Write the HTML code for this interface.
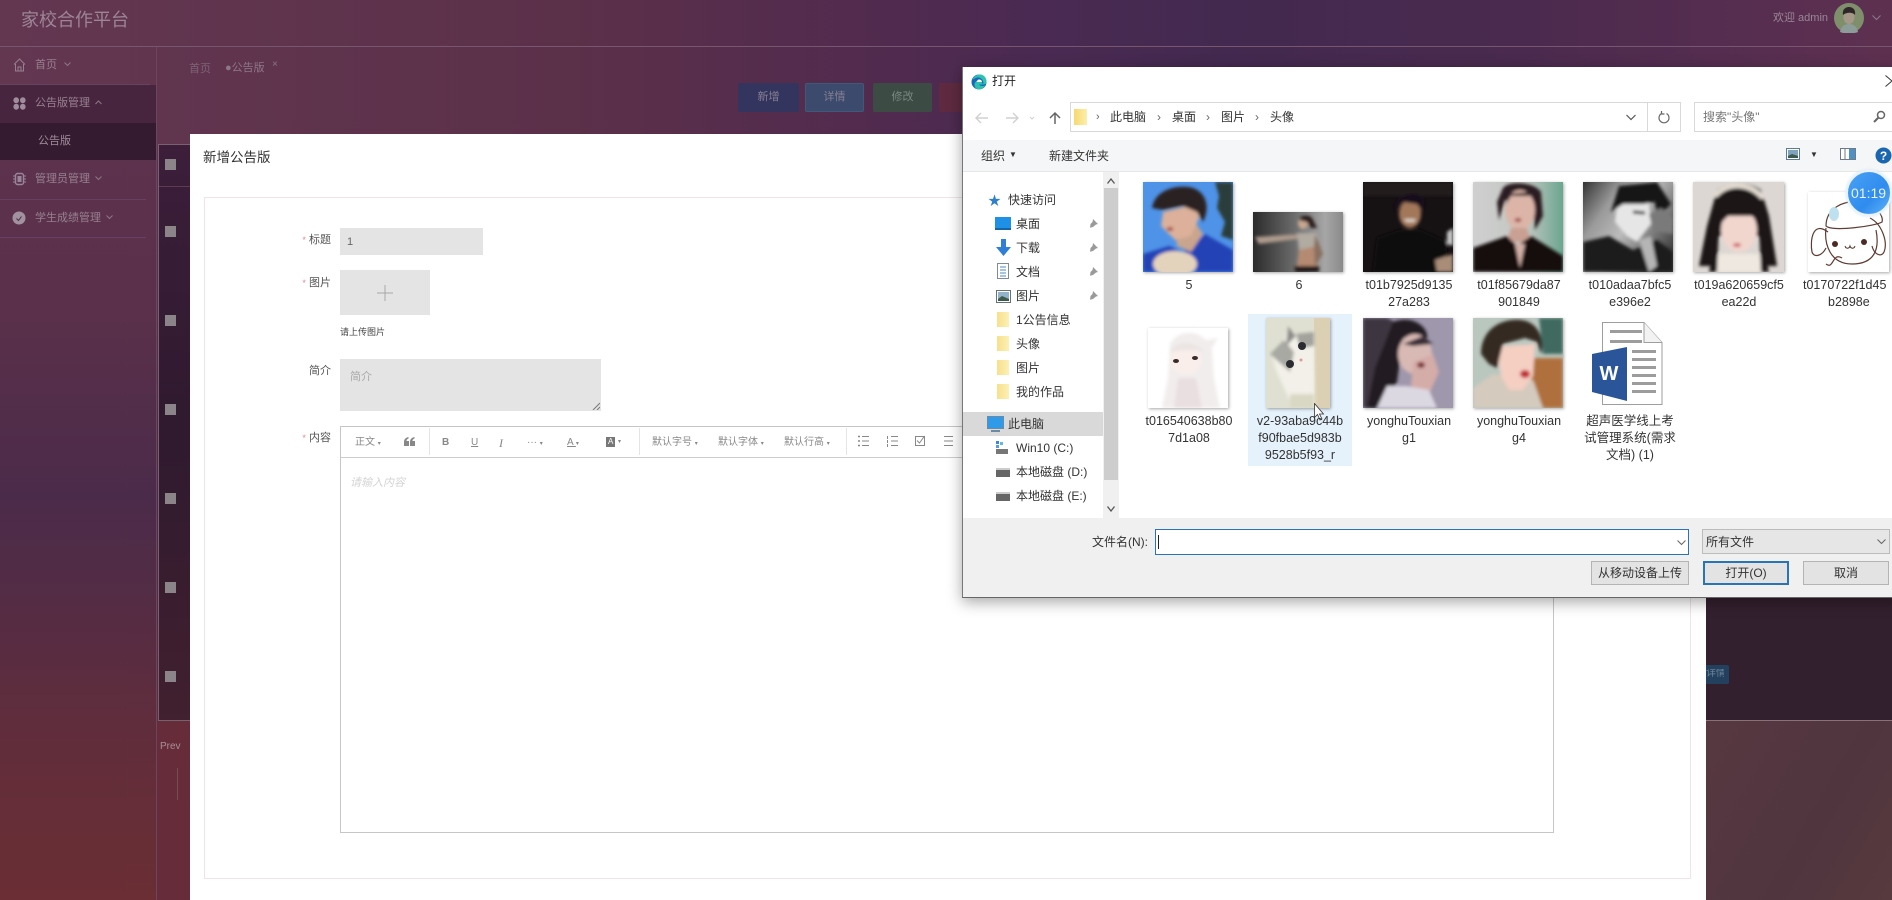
<!DOCTYPE html>
<html lang="zh"><head><meta charset="utf-8"><title>家校合作平台</title>
<style>
html,body{margin:0;padding:0;width:1892px;height:900px;overflow:hidden;background:#4b2b4a}
body{position:relative;font-family:"Liberation Sans","Noto Sans CJK SC",sans-serif;font-size:12px;color:#333}
div,span,svg{position:absolute;box-sizing:border-box}
#w{left:0;top:0;width:1892px;height:900px;overflow:hidden;filter:blur(.35px)}
.t{white-space:nowrap;line-height:1}
.bg{left:0;top:0;width:1892px;height:900px;background:linear-gradient(180deg,#5e3350 0%,#5a304a 35%,#4b2b4a 55%,#5e2d3e 80%,#6a2e34 100%)}
.bgtop{left:0;top:0;width:1892px;height:150px;background:linear-gradient(90deg,#633750 0%,#5b3049 30%,#522b4e 45%,#4a2a52 55%,#43294f 65%,#4a2a4f 80%,#5e3050 100%)}
.side{color:#97808f;font-size:11px}
.btn{height:29px;top:83px;color:#857f92;font-size:11px;text-align:center;line-height:29px;border-radius:2px}
.chk{left:165px;width:11px;height:11px;background:#8b8589}
.lab{color:#555;font-size:11px;text-align:right;width:40px;left:291px}
.lab b{color:#e08a9a;font-weight:normal;font-size:9px}
.tb{color:#888;font-size:10px;top:438px}
.sep{top:428px;height:27px;width:1px;background:#e4e4e4}
.nav{color:#333;font-size:12px;left:1016px}
.pin{left:1089px;width:9px;height:9px}
.crumb{top:111px;font-size:12px;color:#333}
.cap{width:110px;text-align:center;font-size:12.5px;line-height:17px;white-space:nowrap;color:#333;overflow:hidden}
.thumb{box-shadow:1px 1px 3px rgba(0,0,0,.35)}
.dbtn{top:561px;height:24px;background:#e3e3e3;border:1px solid #b4b4b4;text-align:center;line-height:22px;font-size:12px;color:#333}
.fold{left:1037px;width:12px;height:15px;background:linear-gradient(90deg,#f7e08d,#fdf0b5)}
</style></head><body>
<svg width="0" height="0" style="left:0;top:0"><defs><filter id="b" x="-20%" y="-20%" width="140%" height="140%"><feGaussianBlur stdDeviation="1.500"/></filter></defs></svg>
<div id="w">
<div class="bg"></div><div class="bgtop"></div>
<div style="left:0;top:600px;width:1892px;height:300px;background:linear-gradient(180deg,rgba(94,45,62,0),rgba(106,46,52,.35))"></div>

<!-- header -->
<div style="left:0;top:46px;width:1892px;height:1px;background:#77566f"></div>
<div class="t" style="left:21px;top:11px;font-size:18px;color:#9d8596">家校合作平台</div>
<div class="t" style="left:1773px;top:13px;font-size:11px;color:#9a8697">欢迎 admin</div>
<svg style="left:1834px;top:3px" width="30" height="30" viewBox="0 0 30 30"><circle cx="15" cy="15" r="15" fill="#7f8f6c"/><g filter="url(#b)" style="filter:none"><path d="M6 29c1-6 5-8 9-8s8 2 9 8c-5 2-13 2-18 0z" fill="#8c9c98"/><ellipse cx="15" cy="14" rx="5.500" ry="7" fill="#a69888"/><path d="M9 12c-1-6 3-8 6-8s7 2 6 8c-2-3-9-3-12 0z" fill="#2f2627"/></g></svg>
<svg style="left:1872px;top:15px" width="9" height="6" viewBox="0 0 9 6"><path d="M.5.500l4 4 4-4" fill="none" stroke="#8d7a8c"/></svg>

<!-- sidebar -->
<div style="left:156px;top:47px;width:1px;height:853px;background:#6a4660"></div>
<div style="left:0;top:85px;width:156px;height:38px;background:#48253f"></div>
<div style="left:0;top:123px;width:156px;height:37px;background:#351b2f"></div>
<div style="left:0;top:84px;width:150px;height:1px;background:#68435f"></div>
<div style="left:0;top:199px;width:146px;height:1px;background:#67405f"></div>
<div style="left:0;top:237px;width:146px;height:1px;background:#67405f"></div>
<svg style="left:13px;top:58px" width="13" height="14" viewBox="0 0 13 14"><path d="M1 6.500L6.500 1 12 6.500M2.500 6v7h8V6M5 13V9h3v4" fill="none" stroke="#958090"/></svg>
<div class="t side" style="left:35px;top:60px">首页</div>
<svg style="left:64px;top:62px" width="7" height="5" viewBox="0 0 7 5"><path d="M.5.500l3 3 3-3" fill="none" stroke="#8d7686"/></svg>
<svg style="left:13px;top:97px" width="13" height="13" viewBox="0 0 13 13"><g fill="#a08d9b"><ellipse cx="3.200" cy="3.200" rx="2.800" ry="3"/><ellipse cx="9.800" cy="3.200" rx="2.800" ry="3"/><ellipse cx="3.200" cy="9.800" rx="2.800" ry="3"/><ellipse cx="9.800" cy="9.800" rx="2.800" ry="3"/></g></svg>
<div class="t side" style="left:35px;top:98px">公告版管理</div>
<svg style="left:95px;top:100px" width="7" height="5" viewBox="0 0 7 5"><path d="M.5 4l3-3 3 3" fill="none" stroke="#8d7686"/></svg>
<div class="t side" style="left:38px;top:136px;color:#a18c9c">公告版</div>
<svg style="left:13px;top:172px" width="13" height="14" viewBox="0 0 13 14"><rect x="2.500" y="1.500" width="8" height="11" rx="2" fill="none" stroke="#98859a" stroke-width="1.400"/><rect x="4.500" y="4" width="4" height="6" fill="#98859a"/><path d="M0 4h2M0 7h2M0 10h2M11 4h2M11 7h2M11 10h2" stroke="#98859a"/></svg>
<div class="t side" style="left:35px;top:174px">管理员管理</div>
<svg style="left:95px;top:176px" width="7" height="5" viewBox="0 0 7 5"><path d="M.5.500l3 3 3-3" fill="none" stroke="#8d7686"/></svg>
<svg style="left:12px;top:211px" width="14" height="14" viewBox="0 0 14 14"><circle cx="7" cy="7" r="6.500" fill="#a2919f"/><path d="M4.500 7.500l2 2 3-4" fill="none" stroke="#4d2d48"/></svg>
<div class="t side" style="left:35px;top:213px">学生成绩管理</div>
<svg style="left:106px;top:215px" width="7" height="5" viewBox="0 0 7 5"><path d="M.5.500l3 3 3-3" fill="none" stroke="#8d7686"/></svg>

<!-- tabs -->
<div class="t" style="left:189px;top:64px;font-size:11px;color:#7d6477">首页</div>
<div class="t" style="left:225px;top:63px;font-size:11px;color:#8d7688">●公告版</div>
<div class="t" style="left:272px;top:60px;font-size:10px;color:#8d7688">×</div>

<!-- page buttons -->
<div class="btn" style="left:738px;width:61px;background:#34355f">新增</div>
<div class="btn" style="left:805px;width:59px;background:#3c4a6e;border:1px solid #3f5a78;line-height:27px">详情</div>
<div class="btn" style="left:873px;width:59px;background:#3c4c45;color:#7a8880">修改</div>
<div class="btn" style="left:939px;width:59px;background:#5f2a40"></div>

<!-- table peeking behind -->
<div style="left:158px;top:144px;width:32px;height:577px;border:1px solid #77626f;border-right:0;background:linear-gradient(180deg,#3c1e3a 0%,#2f1a2f 50%,#41202f 100%)"></div>
<div style="left:159px;top:186px;width:31px;height:1px;background:#5d3a55"></div>
<div class="chk" style="top:159px"></div><div class="chk" style="top:226px"></div><div class="chk" style="top:315px"></div><div class="chk" style="top:404px"></div><div class="chk" style="top:493px"></div><div class="chk" style="top:582px"></div><div class="chk" style="top:671px"></div>
<div style="left:157px;top:721px;width:33px;height:179px;background:#672c3a"></div>
<div class="t" style="left:160px;top:742px;font-size:10px;color:#a98f98">Prev</div>
<div style="left:177px;top:768px;width:1px;height:32px;background:#7a4a57"></div>

<!-- right of modal -->
<div style="left:1706px;top:590px;width:186px;height:130px;background:#33202e"></div>
<div style="left:1706px;top:720px;width:186px;height:1px;background:#8a7077"></div>
<div style="left:1706px;top:721px;width:186px;height:179px;background:linear-gradient(120deg,#573840,#50353f 60%,#573a3e)"></div>
<div style="left:1706px;top:665px;width:23px;height:19px;background:#23405f;border-radius:0 2px 2px 0"></div>
<div class="t" style="left:1706px;top:669px;font-size:10px;color:#6f8499;width:18px;overflow:hidden;text-align:right">详情</div>

<!-- modal -->
<div style="left:190px;top:134px;width:1516px;height:766px;background:#fff"></div>
<div class="t" style="left:203px;top:151px;font-size:13.500px;color:#333">新增公告版</div>
<div style="left:204px;top:197px;width:1487px;height:682px;border:1px solid #f1e3e8"></div>

<div class="t lab" style="top:235px"><b>*</b> 标题</div>
<div style="left:340px;top:228px;width:143px;height:27px;background:#e4e4e4"></div>
<div class="t" style="left:347px;top:237px;font-size:11px;color:#666">1</div>
<div class="t lab" style="top:278px"><b>*</b> 图片</div>
<div style="left:340px;top:270px;width:90px;height:45px;background:#e4e4e4"></div>
<svg style="left:377px;top:285px" width="16" height="16" viewBox="0 0 16 16"><path d="M8 0v16M0 8h16" stroke="#a8a8a8"/></svg>
<div class="t" style="left:340px;top:328px;font-size:9px;color:#444">请上传图片</div>
<div class="t lab" style="top:366px">简介</div>
<div style="left:340px;top:359px;width:261px;height:52px;background:#e4e4e4"></div>
<div class="t" style="left:350px;top:372px;font-size:11px;color:#aaa">简介</div>
<svg style="left:592px;top:402px" width="8" height="8" viewBox="0 0 8 8"><path d="M1 8l7-7M5 8l3-3" stroke="#777"/></svg>

<div class="t lab" style="top:433px"><b>*</b> 内容</div>
<div style="left:340px;top:426px;width:1214px;height:407px;border:1px solid #c6c6c6"></div>
<div style="left:341px;top:457px;width:1212px;height:1px;background:#cdcdcd"></div>
<div class="sep" style="left:429px"></div><div class="sep" style="left:639px"></div><div class="sep" style="left:846px"></div>
<div class="t tb" style="left:355px">正文 <span style="position:static;font-size:6px">▾</span></div>
<svg style="left:404px;top:437px" width="11" height="9" viewBox="0 0 11 9"><g fill="#888"><path d="M0 9V5C0 2 2 .5 4.500 0v1.500C3 2 2.500 3 2.500 4H5v5z"/><path d="M6 9V5c0-3 2-4.500 4.500-5v1.500C9 2 8.500 3 8.500 4H11v5z"/></g></svg>
<div class="t tb" style="left:442px;font-weight:bold">B</div>
<div class="t tb" style="left:471px;text-decoration:underline">U</div>
<div class="t tb" style="left:499px;font-style:italic;font-family:'Liberation Serif',serif;font-size:12px;top:437px">I</div>
<div class="t tb" style="left:527px">··· <span style="position:static;font-size:6px">▾</span></div>
<div class="t tb" style="left:567px;text-decoration:underline">A <span style="position:static;font-size:6px;display:inline-block">▾</span></div>
<div style="left:606px;top:437px;width:9px;height:10px;background:#777"></div>
<div class="t" style="left:608px;top:438px;font-size:8px;color:#fff">A</div>
<div class="t tb" style="left:618px;font-size:6px;top:439px">▾</div>
<div class="t tb" style="left:652px">默认字号 <span style="position:static;font-size:6px">▾</span></div>
<div class="t tb" style="left:718px">默认字体 <span style="position:static;font-size:6px">▾</span></div>
<div class="t tb" style="left:784px">默认行高 <span style="position:static;font-size:6px">▾</span></div>
<svg style="left:857px;top:435px" width="100" height="12" viewBox="0 0 100 12"><g stroke="#888" fill="none"><path d="M5 1.500h7M5 6h7M5 10.500h7M34 1.500h7M34 6h7M34 10.500h7"/><path d="M1 1.500h2M1 6h2M1 10.500h2" stroke-width="1.500"/><path d="M30.500 1v3M30.500 5v3M30.500 9v3"/><rect x="58.500" y="1.500" width="9" height="9"/><path d="M60 5.500l2.500 2.500 5-7"/><path d="M87 1.500h9M87 6h9M87 10.500h9"/></g></svg>
<div class="t" style="left:350px;top:478px;font-size:11px;color:#d4d4d4;font-style:italic">请输入内容</div>

<!-- dialog -->
<div style="left:962px;top:67px;width:940px;height:531px;background:#fff;box-shadow:0 4px 14px rgba(0,0,0,.35);border-left:1px solid #777;border-bottom:1px solid #666"></div>
<svg style="left:971px;top:74px" width="16" height="16" viewBox="0 0 16 16"><circle cx="8" cy="8" r="7.500" fill="#1668b8"/><path d="M1.500 6C3 1.500 7 .5 9 .5c4 0 6.500 3.500 6.500 7 0 1.500-1 3-3 3H8c1 1.500 4 2 6 1-1.500 2.500-4 4-6 4-2.500 0-4.500-2-4.500-5 0-2 2-4 4.500-4 2 0 3 1.500 3 3H12.500C12 5 9 3 6 3.500 4 4 2.500 5 1.500 6z" fill="#2fc1b0"/><path d="M8 5.500c1.500 0 3 1 3 2.500H5.500C6 6.500 7 5.500 8 5.500z" fill="#fff"/></svg>
<div class="t" style="left:992px;top:75px;font-size:12px;color:#222">打开</div>
<svg style="left:1885px;top:75px" width="7" height="12" viewBox="0 0 7 12"><path d="M.5.500L7 6 .5 11.500" fill="none" stroke="#333"/></svg>

<svg style="left:975px;top:111px" width="90" height="14" viewBox="0 0 90 14"><g fill="none" stroke="#d0d0d0" stroke-width="1.400"><path d="M13 7H1M6 2L1 7l5 5"/><path d="M31 7h12M38 2l5 5-5 5"/><path d="M55 6l2 2 2-2" stroke-width="1"/></g><path d="M80 13V2M75 7l5-5 5 5" fill="none" stroke="#666" stroke-width="1.500"/></svg>
<div style="left:1070px;top:102px;width:611px;height:30px;border:1px solid #d9d9d9"></div>
<div style="left:1647px;top:103px;width:1px;height:28px;background:#d9d9d9"></div>
<div style="left:1074px;top:109px;width:13px;height:16px;background:linear-gradient(90deg,#f6d970,#fdeeaa)"></div>
<div class="t crumb" style="left:1096px;color:#666;font-size:11px;top:112px">›</div>
<div class="t crumb" style="left:1110px">此电脑</div><div class="t crumb" style="left:1157px;color:#666;top:111px">›</div>
<div class="t crumb" style="left:1172px">桌面</div><div class="t crumb" style="left:1206px;color:#666">›</div>
<div class="t crumb" style="left:1221px">图片</div><div class="t crumb" style="left:1255px;color:#666">›</div>
<div class="t crumb" style="left:1270px">头像</div>
<svg style="left:1626px;top:114px" width="10" height="7" viewBox="0 0 10 7"><path d="M.5 1l4.500 4.500L9.500 1" fill="none" stroke="#555" stroke-width="1.200"/></svg>
<svg style="left:1658px;top:110px" width="12" height="14" viewBox="0 0 12 14"><path d="M8.500 3.500A5 5 0 1 1 3.500 3.500M3.500 1v3h3" fill="none" stroke="#666" stroke-width="1.200"/></svg>
<div style="left:1694px;top:102px;width:198px;height:30px;border:1px solid #d9d9d9;border-right:0"></div>
<div class="t" style="left:1703px;top:111px;font-size:12px;color:#777">搜索"头像"</div>
<svg style="left:1873px;top:110px" width="13" height="13" viewBox="0 0 13 13"><circle cx="8" cy="5" r="3.500" fill="none" stroke="#666" stroke-width="1.500"/><path d="M5.500 7.500L1 12" stroke="#666" stroke-width="2"/></svg>

<div style="left:963px;top:140px;width:929px;height:32px;background:#f5f6f7;border-bottom:1px solid #e6e6e6"></div>
<div class="t" style="left:981px;top:150px;font-size:12px;color:#333">组织</div>
<div class="t" style="left:1009px;top:151px;font-size:8px;color:#333">▼</div>
<div class="t" style="left:1049px;top:150px;font-size:12px;color:#333">新建文件夹</div>
<svg style="left:1786px;top:148px" width="14" height="12" viewBox="0 0 14 12"><rect x=".5" y=".5" width="13" height="11" fill="#fff" stroke="#5a7d9a"/><rect x="2" y="2" width="10" height="8" fill="#7fa3bf"/><path d="M2 8l4-2 6 2v2H2z" fill="#3d5a4a"/></svg>
<div class="t" style="left:1810px;top:151px;font-size:8px;color:#333">▼</div>
<svg style="left:1840px;top:148px" width="16" height="12" viewBox="0 0 16 12"><rect x=".5" y=".5" width="15" height="11" fill="#fff" stroke="#6d7b88"/><rect x="9" y="1" width="6" height="10" fill="#4d90c8"/><path d="M5 1v10" stroke="#6d7b88"/></svg>
<svg style="left:1875px;top:147px" width="17" height="17" viewBox="0 0 17 17"><circle cx="8.500" cy="8.500" r="8" fill="#1b66b0"/><text x="8.500" y="13" text-anchor="middle" font-family="Liberation Sans" font-weight="bold" font-size="12" fill="#fff">?</text></svg>

<!-- nav tree -->
<div style="left:1103px;top:172px;width:16px;height:346px;background:#f0f0f0"></div>
<div style="left:1104px;top:188px;width:14px;height:292px;background:#cdcdcd"></div>
<svg style="left:1107px;top:178px" width="8" height="6" viewBox="0 0 8 6"><path d="M.5 5.500L4 1l3.500 4.500" fill="none" stroke="#555" stroke-width="1.300"/></svg>
<svg style="left:1107px;top:506px" width="8" height="6" viewBox="0 0 8 6"><path d="M.5.500L4 5 7.500.5" fill="none" stroke="#555" stroke-width="1.300"/></svg>
<div style="left:963px;top:412px;width:140px;height:24px;background:#d9d9d9"></div>
<div class="t" style="left:988px;top:194px;font-size:13px;color:#2f80c8">★</div>
<div class="t" style="left:1008px;top:194px;color:#333">快速访问</div>
<div style="left:995px;top:217px;width:16px;height:13px;background:#1e90e6;border-bottom:2px solid #1665a8"></div><div class="t nav" style="top:218px">桌面</div>
<svg style="left:996px;top:239px" width="15" height="17" viewBox="0 0 15 17"><path d="M5 0h5v8h5l-7.500 9L0 8h5z" fill="#2f7fd6"/></svg><div class="t nav" style="top:242px">下载</div>
<svg style="left:997px;top:263px" width="12" height="16" viewBox="0 0 12 16"><rect x=".5" y=".5" width="11" height="15" fill="#fff" stroke="#7f8c96"/><path d="M3 4h6M3 7h6M3 10h6M3 13h6" stroke="#4d8cc0"/></svg><div class="t nav" style="top:266px">文档</div>
<svg style="left:996px;top:290px" width="15" height="13" viewBox="0 0 15 13"><rect x=".5" y=".5" width="14" height="12" fill="#fff" stroke="#65727c"/><rect x="2" y="2" width="11" height="9" fill="#93b3cc"/><path d="M2 9l4-3 7 3v2H2z" fill="#3e5a4a"/></svg><div class="t nav" style="top:290px">图片</div>
<svg class="pin" style="top:219px" viewBox="0 0 9 9"><path d="M4 0l5 5-2 .5L4 8 1 8.800 1.500 5 3.500 3z" fill="#9a9a9a"/></svg>
<svg class="pin" style="top:243px" viewBox="0 0 9 9"><path d="M4 0l5 5-2 .5L4 8 1 8.800 1.500 5 3.500 3z" fill="#9a9a9a"/></svg>
<svg class="pin" style="top:267px" viewBox="0 0 9 9"><path d="M4 0l5 5-2 .5L4 8 1 8.800 1.500 5 3.500 3z" fill="#9a9a9a"/></svg>
<svg class="pin" style="top:291px" viewBox="0 0 9 9"><path d="M4 0l5 5-2 .5L4 8 1 8.800 1.500 5 3.500 3z" fill="#9a9a9a"/></svg>
<div class="fold" style="left:997px;top:312px"></div><div class="t nav" style="top:314px">1公告信息</div>
<div class="fold" style="left:997px;top:336px"></div><div class="t nav" style="top:338px">头像</div>
<div class="fold" style="left:997px;top:360px"></div><div class="t nav" style="top:362px">图片</div>
<div class="fold" style="left:997px;top:384px"></div><div class="t nav" style="top:386px">我的作品</div>
<svg style="left:987px;top:416px" width="17" height="16" viewBox="0 0 17 16"><rect x=".5" y=".5" width="16" height="12" fill="#2f9be8" stroke="#6b8aa5"/><path d="M4 15h9" stroke="#6b8aa5" stroke-width="2"/></svg><div class="t" style="left:1008px;top:418px;color:#333">此电脑</div>
<svg style="left:995px;top:441px" width="14" height="14" viewBox="0 0 14 14"><rect x="1" y="8" width="12" height="5" fill="#777"/><rect x="1" y="0" width="3" height="3" fill="#3a8ad0"/><rect x="5" y="1" width="3" height="3" fill="#64b5e8"/><rect x="1" y="4" width="3" height="3" fill="#4ea0dc"/></svg><div class="t nav" style="top:442px">Win10 (C:)</div>
<svg style="left:996px;top:467px" width="14" height="10" viewBox="0 0 14 10"><rect y="3" width="14" height="7" fill="#666"/><rect y="1" width="14" height="2" fill="#ccc"/></svg><div class="t nav" style="top:466px">本地磁盘 (D:)</div>
<svg style="left:996px;top:491px" width="14" height="10" viewBox="0 0 14 10"><rect y="3" width="14" height="7" fill="#666"/><rect y="1" width="14" height="2" fill="#ccc"/></svg><div class="t nav" style="top:490px">本地磁盘 (E:)</div>

<!-- selected -->
<div style="left:1248px;top:314px;width:104px;height:152px;background:#e5f1fb"></div>

<!-- thumbs row 1 -->
<svg class="thumb" style="left:1143px;top:182px" width="90" height="90" viewBox="0 0 90 90"><rect width="90" height="90" fill="#4f93e8"/><g filter="url(#b)"><path d="M72 0h18v58l-12-4 4-14-8-14 2-12z" fill="#2a3d3a"/><path d="M0 72l26-8 14 6 22-18 28 16v22H0z" fill="#2443b6"/><path d="M32 46l20-6 8 12-12 18-14-6z" fill="#c9a58e"/><path d="M20 30l34-8 2 14-8 18-16 4-14-14z" fill="#dcb09a"/><path d="M9 26C12 6 38 2 50 6s18 18 10 34l-6-10-14-6-20 4z" fill="#2b2422"/><ellipse cx="32" cy="82" rx="22" ry="13" fill="#e4d3bc"/><ellipse cx="27" cy="47" rx="3.500" ry="2" fill="#a8504a"/></g></svg>
<svg class="thumb" style="left:1253px;top:212px" width="90" height="60" viewBox="0 0 90 60"><defs><linearGradient id="g6"><stop offset="0" stop-color="#2b2b2b"/><stop offset=".45" stop-color="#6a6a6a"/><stop offset=".8" stop-color="#a6a6a6"/><stop offset="1" stop-color="#8a8a8a"/></linearGradient></defs><rect width="90" height="60" fill="url(#g6)"/><g filter="url(#b)"><path d="M2 25l46-3 4 4-46 6z" fill="#ad9a8c"/><ellipse cx="50" cy="11" rx="5" ry="6" fill="#c9a890"/><path d="M46 8c2-6 12-6 14 0l4 8-6 0-4-6z" fill="#2a1e1e"/><path d="M44 21h20l2 13-20 4z" fill="#b1aba2"/><path d="M46 38l18-4 0 20H44z" fill="#b58a72"/><path d="M42 54h24v6H42z" fill="#1c1414"/><path d="M62 22l8 20-8 12-1-18z" fill="#8a7060"/></g></svg>
<svg class="thumb" style="left:1363px;top:182px" width="90" height="90" viewBox="0 0 90 90"><rect width="90" height="90" fill="#161113"/><g filter="url(#b)"><rect x="0" y="0" width="90" height="14" fill="#221d1c"/><path d="M14 56l22-8h22l26 12v12l-10 18H10z" fill="#0f0c0e"/><ellipse cx="47" cy="32" rx="11" ry="14" fill="#a2775a"/><path d="M32 30c-2-14 10-18 18-18s14 4 10 18l-6-8-14-2z" fill="#15101a"/><path d="M41 37h12l-2 3h-8z" fill="#e0d4c8"/><path d="M72 78l18-6v18H74z" fill="#a98d78"/><path d="M84 50l6-4v18l-6-2z" fill="#c8c8c8"/></g></svg>
<svg class="thumb" style="left:1473px;top:182px" width="90" height="90" viewBox="0 0 90 90"><defs><linearGradient id="g1f"><stop offset="0" stop-color="#cfcfcf"/><stop offset=".6" stop-color="#c2c6c2"/><stop offset="1" stop-color="#6aa68f"/></linearGradient></defs><rect width="90" height="90" fill="url(#g1f)"/><g filter="url(#b)"><path d="M30 6c6-8 32-6 38 4l2 24-8 14-2-26-28-4-6 20-2-18z" fill="#2b1f20"/><ellipse cx="47" cy="28" rx="15" ry="20" fill="#dcb5a8"/><path d="M32 24l4-12 22-2 8 14-6-10-22 0z" fill="#32272a"/><path d="M38 46l16 0 4 14H34z" fill="#c9a093"/><path d="M0 66l34-12 10 10 14-10 32 20v16H0z" fill="#14100f"/><path d="M42 62l10 0-5 24z" fill="#d3b0a6"/><ellipse cx="45" cy="38" rx="3.500" ry="2" fill="#a04a4c"/></g></svg>
<svg class="thumb" style="left:1583px;top:182px" width="90" height="90" viewBox="0 0 90 90"><defs><linearGradient id="g10" x1="0" y1="0" x2="1" y2=".7"><stop offset="0" stop-color="#333"/><stop offset=".3" stop-color="#9a9a9a"/><stop offset=".55" stop-color="#bbb"/><stop offset="1" stop-color="#444"/></linearGradient></defs><rect width="90" height="90" fill="url(#g10)"/><g filter="url(#b)"><path d="M34 22l32-2 2 22-14 18-10-6-12-14z" fill="#e6e6e6"/><path d="M28 30l8-26 38-4 14 22-14 14-2-16-12 2-20 0z" fill="#141414"/><path d="M66 32l12-6 12 10v16l-20-4z" fill="#7a7a7a"/><path d="M0 60l26-6 24 14 24-10 16 12v20H0z" fill="#1c1c1c"/><path d="M56 58l12-4 6 30-8 6z" fill="#b5b5b5"/><path d="M50 30l12 1" stroke="#222" stroke-width="3"/></g></svg>
<svg class="thumb" style="left:1693px;top:182px" width="91" height="90" viewBox="0 0 91 90"><rect width="91" height="90" fill="#dcd7d3"/><g filter="url(#b)"><path d="M24 8c14-10 32-8 44 0l8 26 8 50H70l-4-30H26l-6 30H6l8-40z" fill="#1a1516"/><path d="M22 14C34 0 56 0 70 16" fill="none" stroke="#e3dcd2" stroke-width="5"/><ellipse cx="46" cy="48" rx="18" ry="22" fill="#f1d6cd"/><path d="M27 42l2-16 34-2 4 18-8-8-24 0z" fill="#1a1516"/><path d="M20 82l6-10 40 0 8 10 0 8H20z" fill="#efe8e0"/><path d="M26 44l-10 46h8zM66 44l10 46h-8z" fill="#1a1516"/><ellipse cx="44" cy="63" rx="4" ry="2" fill="#d0646a"/></g></svg>
<svg class="thumb" style="left:1808px;top:192px" width="81" height="80" viewBox="0 0 81 80"><rect width="81" height="80" fill="#fff"/><g fill="none" stroke="#5e3b33" stroke-width="1.200"><path d="M20 40C4 28 2 50 4 60c2 6 10 4 14-4M62 26c12 6 18 24 14 34-3 6-10 2-12-6"/><path d="M18 34C18 16 36 8 52 10s24 14 22 20c-6 4-50 10-56 4z"/><path d="M18 36c-2 16 4 36 26 36s28-14 24-34"/><path d="M18 72c8 6 6-12 16-6"/></g><circle cx="27" cy="52" r="3" fill="#4b2c24"/><circle cx="56" cy="50" r="3" fill="#4b2c24"/><path d="M37 54c1 3 4 3 5 0 1 3 4 3 5 0" fill="none" stroke="#4b2c24"/><ellipse cx="26" cy="22" rx="5" ry="7" fill="#bfe0ef"/></svg>

<!-- timer -->
<div style="left:1846px;top:170px;width:46px;height:46px;border-radius:50%;background:linear-gradient(135deg,#4aa3f5,#2f8bee 60%,#61b5f7);border:2px solid #e8f3fd;box-shadow:0 0 3px #cfe4f8"></div>
<div class="t" style="left:1851px;top:186px;font-size:14px;color:#e8f3fd">01:19</div>

<!-- captions row1 -->
<div class="cap" style="left:1134px;top:277px">5</div>
<div class="cap" style="left:1244px;top:277px">6</div>
<div class="cap" style="left:1354px;top:277px">t01b7925d9135<br>27a283</div>
<div class="cap" style="left:1464px;top:277px">t01f85679da87<br>901849</div>
<div class="cap" style="left:1575px;top:277px">t010adaa7bfc5<br>e396e2</div>
<div class="cap" style="left:1684px;top:277px">t019a620659cf5<br>ea22d</div>
<div class="cap" style="left:1803px;top:277px;width:89px;text-align:left">t0170722f1d45<br><span style="position:static;padding-left:25px">b2898e</span></div>

<!-- thumbs row 2 -->
<svg class="thumb" style="left:1148px;top:328px" width="80" height="80" viewBox="0 0 80 80"><rect width="80" height="80" fill="#fff"/><g filter="url(#b)"><path d="M22 16C30 2 48 2 58 12l12-2-6 10 2 30 6 30H14l6-30z" fill="#f2eded"/><ellipse cx="38" cy="32" rx="15" ry="14" fill="#f9eee9"/><path d="M26 80l4-30 18 0 6 30z" fill="#e9dfe0"/><path d="M22 24c6-12 26-12 34 0l-8 -2-14 0z" fill="#eae4e3"/></g><ellipse cx="28" cy="33" rx="3" ry="2" fill="#3b2a2a"/><ellipse cx="47" cy="30" rx="3" ry="2" fill="#3b2a2a"/></svg>
<svg class="thumb" style="left:1266px;top:318px" width="64" height="90" viewBox="0 0 64 90"><rect width="64" height="90" fill="#dfe0d2"/><rect x="48" width="16" height="90" fill="#dcd0b4"/><g filter="url(#b)"><path d="M6 38l12-14 4-16 10 10 16-2 1 74-22 0L10 52z" fill="#f2f0e8"/><path d="M4 36l14-14 10 12-4 20z" fill="#a8a9a2"/><path d="M22 8l8 10-10 10z" fill="#8f8d88"/><path d="M30 16l18-2v14l-14 2z" fill="#a3a29c"/><path d="M24 76h24v14H24z" fill="#d9d8c4"/></g><circle cx="36" cy="28" r="4" fill="#2b2b30"/><circle cx="24" cy="46" r="4" fill="#2b2b30"/><circle cx="35" cy="42" r="1.500" fill="#dc9a95"/></svg>
<svg class="thumb" style="left:1363px;top:318px" width="90" height="90" viewBox="0 0 90 90"><rect width="90" height="90" fill="#9f97ac"/><g filter="url(#b)"><path d="M0 0h24L40 8 20 40 30 90H0z" fill="#3d3440"/><path d="M30 4c20-8 36 6 34 16L40 20l-6 44-14 26H4L12 50z" fill="#231c24"/><ellipse cx="52" cy="36" rx="17" ry="20" fill="#d9b9b4"/><path d="M40 26l20-8 10 8-20 2z" fill="#3a2f38"/><path d="M50 44l20-8 6 18-10 22-18-8z" fill="#d4aca8"/><path d="M14 90l10-22 20 0 22 4 8 18z" fill="#dcd8e2"/><ellipse cx="58" cy="47" rx="4" ry="3" fill="#7d3038"/></g></svg>
<svg class="thumb" style="left:1473px;top:318px" width="90" height="90" viewBox="0 0 90 90"><rect width="90" height="90" fill="#b9c7bf"/><g filter="url(#b)"><path d="M66 0h24v36l-20 0z" fill="#3f6b60"/><path d="M54 40h36v50H54z" fill="#b06f3e"/><path d="M0 70l20-14 40 6 10 28H0z" fill="#d4cabd"/><path d="M24 32l6-4 32-2-2 32-10 14H36L28 58z" fill="#f4cfc2"/><path d="M8 36C8 10 30 0 48 2s24 20 20 34l-4-12-12-4-22 6-6 24-8-4z" fill="#352a24"/><ellipse cx="52" cy="56" rx="5" ry="4" fill="#c32f35"/></g></svg>
<!-- word icon -->
<svg style="left:1592px;top:322px" width="75" height="84" viewBox="0 0 75 84"><path d="M10.500.500H52l18 20v62H10.500z" fill="#fff" stroke="#9e9e9e"/><path d="M52 .500v20h18" fill="#f2f2f2" stroke="#9e9e9e"/><g fill="#9c9c9c"><rect x="18" y="8" width="32" height="3"/><rect x="18" y="18" width="32" height="3"/><rect x="40" y="28" width="24" height="3"/><rect x="40" y="36" width="24" height="3"/><rect x="40" y="44" width="24" height="3"/><rect x="40" y="52" width="24" height="3"/><rect x="40" y="60" width="24" height="3"/><rect x="40" y="68" width="24" height="3"/></g><path d="M0 32l35-7v54L0 70z" fill="#2a5699"/><text x="17" y="58" text-anchor="middle" font-family="Liberation Sans" font-weight="bold" font-size="20" fill="#fff">W</text></svg>

<!-- cursor -->
<svg style="left:1314px;top:403px" width="11" height="18" viewBox="0 0 11 18"><path d="M.5.500v14l3-3 2.500 5.500 2-1-2.500-5h4z" fill="#fff" stroke="#333" stroke-width=".8"/></svg>

<!-- captions row2 -->
<div class="cap" style="left:1134px;top:413px">t016540638b80<br>7d1a08</div>
<div class="cap" style="left:1245px;top:413px">v2-93aba9c44b<br>f90fbae5d983b<br>9528b5f93_r</div>
<div class="cap" style="left:1354px;top:413px">yonghuTouxian<br>g1</div>
<div class="cap" style="left:1464px;top:413px">yonghuTouxian<br>g4</div>
<div class="cap" style="left:1575px;top:413px">超声医学线上考<br>试管理系统(需求<br>文档) (1)</div>

<!-- dialog footer -->
<div style="left:963px;top:518px;width:929px;height:79px;background:#f0f0f0"></div>
<div class="t" style="left:1092px;top:536px;font-size:12px;color:#333">文件名(N):</div>
<div style="left:1155px;top:529px;width:534px;height:26px;background:#fff;border:1px solid #2a73b5"></div>
<div style="left:1158px;top:535px;width:1px;height:14px;background:#222"></div>
<svg style="left:1677px;top:540px" width="9" height="6" viewBox="0 0 9 6"><path d="M.5.500l4 4 4-4" fill="none" stroke="#666"/></svg>
<div style="left:1702px;top:529px;width:188px;height:25px;background:#e6e6e6;border:1px solid #bcbcbc"></div>
<div class="t" style="left:1706px;top:536px;font-size:12px;color:#333">所有文件</div>
<svg style="left:1877px;top:539px" width="9" height="6" viewBox="0 0 9 6"><path d="M.5.500l4 4 4-4" fill="none" stroke="#666"/></svg>
<div class="dbtn" style="left:1591px;width:98px">从移动设备上传</div>
<div class="dbtn" style="left:1703px;width:86px;border:2px solid #2a73b5;line-height:20px">打开(O)</div>
<div class="dbtn" style="left:1803px;width:86px">取消</div>
</div>
</body></html>
